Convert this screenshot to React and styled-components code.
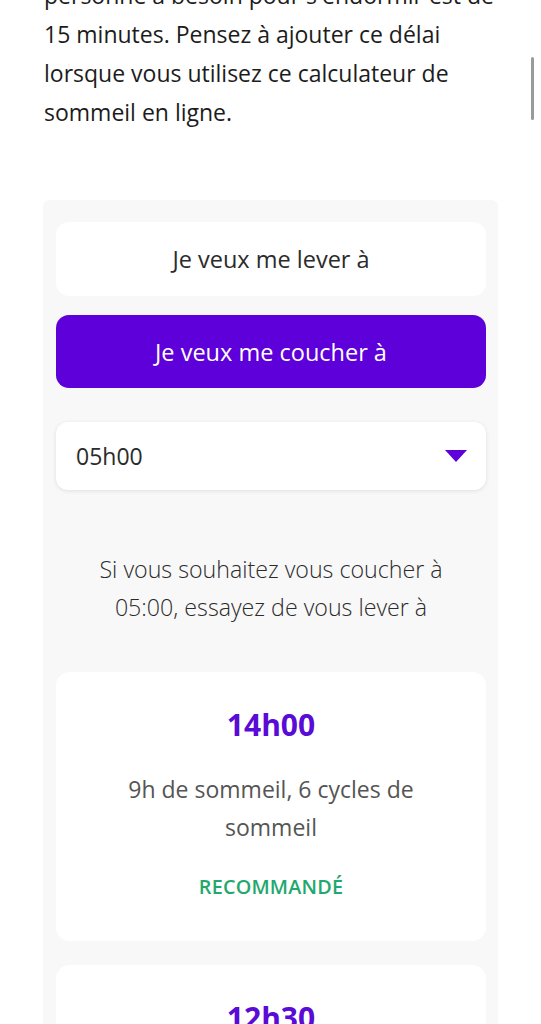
import React from "react";
import styled, { createGlobalStyle } from "styled-components";

const Global = createGlobalStyle`
  html, body { margin: 0; padding: 0; background: #ffffff; }
  body { font-family: "Open Sans", "Noto Sans", sans-serif; overflow: hidden; }
  * { box-sizing: border-box; }
`;

const Page = styled.div`
  width: 541px;
  height: 1024px;
  overflow: hidden;
  position: relative;
`;

const Column = styled.div`
  margin: -24px 44px 0 44px;
  display: flex;
  flex-direction: column;
`;

const Intro = styled.p`
  margin: 0 -8px 0 0;
  font-size: 23px;
  line-height: 39px;
  color: #1c1c1c;
  font-weight: 400;
`;

const Panel = styled.section`
  margin: 68px -1px 0 -1px;
  background: #f8f8f8;
  border-radius: 6px;
  padding: 22px 12px 0 13px;
  display: flex;
  flex-direction: column;
`;

const Toggle = styled.button`
  height: ${(p) => (p.$active ? "73px" : "74px")};
  margin-bottom: ${(p) => (p.$active ? "34px" : "19px")};
  border: none;
  border-radius: 13px;
  background: ${(p) => (p.$active ? "#5e00d9" : "#ffffff")};
  color: ${(p) => (p.$active ? "#ffffff" : "#2b2b2b")};
  font-family: "Open Sans", sans-serif;
  font-size: 23.5px;
  font-weight: 400;
  display: flex;
  align-items: center;
  justify-content: center;
  padding: 0;
`;

const Select = styled.div`
  height: 68px;
  background: #ffffff;
  border-radius: 12px;
  box-shadow: 0 1px 4px rgba(0, 0, 0, 0.1);
  display: flex;
  align-items: center;
  justify-content: space-between;
  padding: 0 19px 0 20px;
  font-size: 23px;
  color: #2b2b2b;
`;

const Caret = styled.svg`
  width: 22px;
  height: 12px;
  display: block;
`;

const Lead = styled.p`
  margin: 60px 0 46px;
  text-align: center;
  font-size: 23.2px;
  line-height: 38px;
  font-weight: 300;
  color: #2b2b2b;
  padding: 0 20px;
`;

const Card = styled.article`
  background: #ffffff;
  border-radius: 14px;
  padding: 34px 20px 42px;
  margin-bottom: 24px;
  display: flex;
  flex-direction: column;
  align-items: center;
  text-align: center;
`;

const Time = styled.div`
  font-size: 30px;
  line-height: 38px;
  font-weight: 700;
  color: #5a0bd6;
`;

const Detail = styled.div`
  margin-top: 26px;
  font-size: 23px;
  line-height: 38px;
  color: #555555;
  padding: 0 40px;
`;

const Badge = styled.div`
  margin-top: 29px;
  font-size: 19.8px;
  line-height: 24px;
  font-weight: 600;
  color: #22a86d;
  letter-spacing: 0.2px;
`;

const Scrollbar = styled.div`
  position: absolute;
  right: 7px;
  top: 57px;
  width: 3px;
  height: 63px;
  border-radius: 2px;
  background: #9a9a9a;
`;

const results = [
  { time: "14h00", detail: "9h de sommeil, 6 cycles de sommeil", recommended: true },
  { time: "12h30", detail: "7h30 de sommeil, 5 cycles de sommeil", recommended: true },
];

export default function App() {
  return (
    <Page>
      <Global />
      <Column>
        <Intro>
          personne a besoin pour s'endormir est de 15 minutes. Pensez à ajouter ce délai
          lorsque vous utilisez ce calculateur de sommeil en ligne.
        </Intro>
        <Panel>
          <Toggle>Je veux me lever à</Toggle>
          <Toggle $active>Je veux me coucher à</Toggle>
          <Select>
            <span>05h00</span>
            <Caret viewBox="0 0 22 12">
              <path d="M0 0 L22 0 L11 12 Z" fill="#5e00d9" />
            </Caret>
          </Select>
          <Lead>Si vous souhaitez vous coucher à 05:00, essayez de vous lever à</Lead>
          {results.map((r) => (
            <Card key={r.time}>
              <Time>{r.time}</Time>
              <Detail>{r.detail}</Detail>
              {r.recommended && <Badge>RECOMMANDÉ</Badge>}
            </Card>
          ))}
        </Panel>
      </Column>
      <Scrollbar />
    </Page>
  );
}
